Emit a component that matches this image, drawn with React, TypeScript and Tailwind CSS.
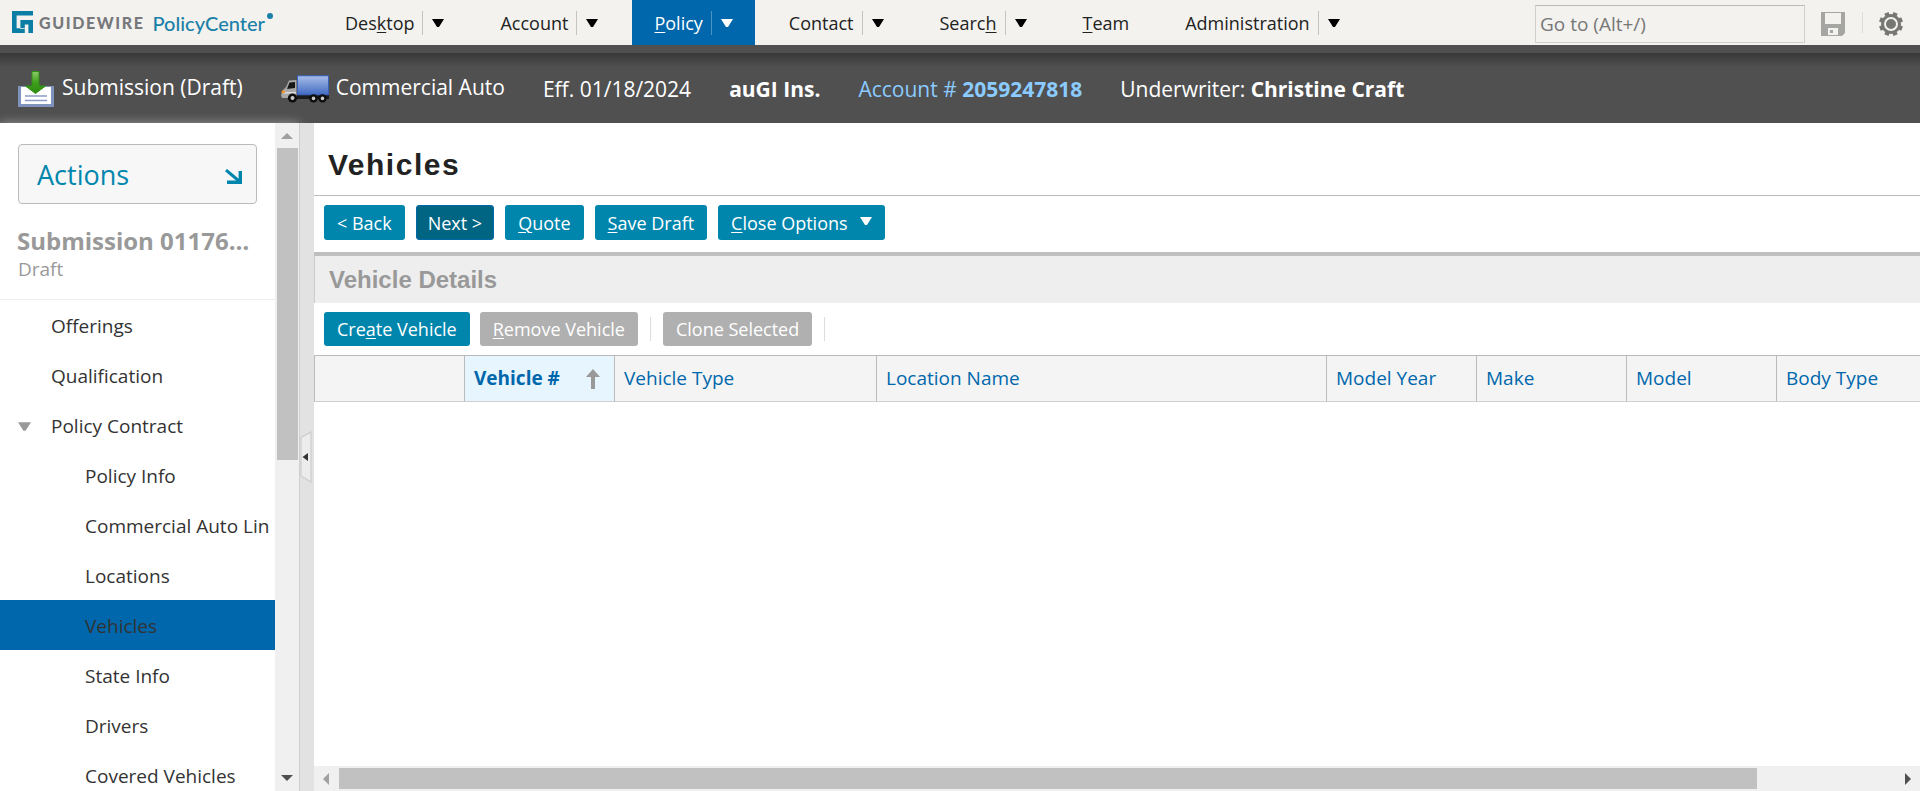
import type { ReactNode } from "react";

type NavItem = { before: string; key?: string; after?: string; active?: boolean; menu?: boolean };

const navItems: NavItem[] = [
  { before: "Des", key: "k", after: "top", menu: true },
  { before: "Account", menu: true },
  { before: "", key: "P", after: "olicy", menu: true, active: true },
  { before: "Contact", menu: true },
  { before: "Searc", key: "h", menu: true },
  { before: "", key: "T", after: "eam" },
  { before: "Administration", menu: true },
];

const steps = [
  { label: "Offerings", level: 0 },
  { label: "Qualification", level: 0 },
  { label: "Policy Contract", level: 0, open: true },
  { label: "Policy Info", level: 1 },
  { label: "Commercial Auto Lin", level: 1 },
  { label: "Locations", level: 1 },
  { label: "Vehicles", level: 1, active: true },
  { label: "State Info", level: 1 },
  { label: "Drivers", level: 1 },
  { label: "Covered Vehicles", level: 1 },
];

const columns = ["Vehicle Type", "Location Name", "Model Year", "Make", "Model", "Body Type"];

function Key({ children }: { children: ReactNode }) {
  return <span className="underline decoration-1 underline-offset-2">{children}</span>;
}

function Down({ className }: { className: string }) {
  return (
    <svg viewBox="0 0 12 8" className={className} fill="currentColor" aria-hidden="true">
      <path d="M0 0h12L7 8H5z" />
    </svg>
  );
}

function Logo() {
  return (
    <a href="#home" className="flex w-[311px] shrink-0 items-center pl-3 font-['Lato',sans-serif]">
      <svg viewBox="0 0 21 22" className="-mt-px h-[22px] w-[21px]" aria-hidden="true">
        <path fill="#0a7ea4" d="M0 0h21v4.600H4.600v12.600h3.800V9H21v13h-4.600v-8.600h-3.600V22H0z" />
        <path fill="#f3f2ee" d="M8 17.200h4.800v.8H8z" />
      </svg>
      <span className="ml-1.5 text-[16px] font-black tracking-widest text-[#77787b]">GUIDEWIRE</span>
      <span className="ml-2 text-[20px] leading-6 font-medium text-[#1a80a8]">PolicyCenter</span>
      <svg viewBox="0 0 6 6" className="mb-3.5 ml-0.5 h-1.5 w-1.5" aria-hidden="true">
        <circle cx="3" cy="3" r="3" fill="#1a80a8" />
      </svg>
    </a>
  );
}

function InboxIcon() {
  return (
    <svg viewBox="0 0 36 36" className="h-9 w-9" aria-hidden="true">
      <defs>
        <linearGradient id="arrow" x1="0" y1="0" x2="0" y2="1">
          <stop offset="0" stopColor="#8ccb6a" />
          <stop offset="0.500" stopColor="#3fa01c" />
          <stop offset="1" stopColor="#2c8a0e" />
        </linearGradient>
      </defs>
      <path fill="#7f93bd" d="M0 15h36v21H0z" />
      <path fill="#fff" d="M3 16h30v17H3z" />
      <path stroke="#8c9cc4" strokeWidth="1.500" d="M7 25h22M7 29.500h22" />
      <path fill="url(#arrow)" stroke="#2f8f14" strokeWidth="1" d="M14 .5h7V15h6.500l-10 7.500L7.500 15H14z" />
    </svg>
  );
}

function TruckIcon() {
  return (
    <svg viewBox="0 0 48 28" className="h-7 w-12" aria-hidden="true">
      <defs>
        <linearGradient id="box" x1="0" y1="0" x2="0" y2="1">
          <stop offset="0" stopColor="#a9bfea" />
          <stop offset="1" stopColor="#4069c0" />
        </linearGradient>
      </defs>
      <path fill="#1b1b1b" d="M12 20h36v4H12z" />
      <path fill="#a8a8a8" d="M8 5.500 15.500 5v18H1l-1-3 2-5 3-3z" />
      <path fill="#161616" d="M8.500 7.500 14 7v6l-8 1z" />
      <path fill="#ddd" d="M2 17h13v1.500H2z" />
      <path fill="#f29a2e" d="M1 15.500h3v2.500H.5z" />
      <path fill="url(#box)" stroke="#3a62bb" d="M16.500.8h31v19h-31z" />
      <g fill="#0d0d0d">
        <circle cx="11.500" cy="23" r="4.600" />
        <circle cx="32.500" cy="23.400" r="4.200" />
        <circle cx="41.500" cy="23.400" r="4.200" />
      </g>
      <g fill="#c9c9c9">
        <circle cx="11.500" cy="23" r="2" />
        <circle cx="32.500" cy="23.400" r="1.800" />
        <circle cx="41.500" cy="23.400" r="1.800" />
      </g>
    </svg>
  );
}

function SaveIcon() {
  return (
    <svg viewBox="0 0 24 24" className="h-6 w-6" aria-hidden="true">
      <path fill="#a5a5a3" d="M0 0h24v21l-3 3H0z" />
      <path fill="#f3f2ee" d="M4 1h16v11H4zM7 16h10v7H7z" />
      <path fill="#a5a5a3" d="M9 18h3v3H9z" />
    </svg>
  );
}

function GearIcon() {
  return (
    <svg viewBox="0 0 24 24" className="h-6 w-6" aria-hidden="true">
      <g fill="#777775">
        <rect x="9.750" y="0" width="4.500" height="24" transform="rotate(-22.500 12 12)" />
        <rect x="9.750" y="0" width="4.500" height="24" transform="rotate(22.500 12 12)" />
        <rect x="9.750" y="0" width="4.500" height="24" transform="rotate(67.500 12 12)" />
        <rect x="9.750" y="0" width="4.500" height="24" transform="rotate(-67.500 12 12)" />
        <circle cx="12" cy="12" r="10" />
      </g>
      <circle cx="12" cy="12" r="6" fill="#777775" stroke="#f3f2ee" strokeWidth="2" />
    </svg>
  );
}

const btn = "flex items-center rounded-[3px] text-[18px] leading-6 whitespace-nowrap text-white";

export default function App() {
  return (
    <div className="flex h-screen flex-col overflow-hidden bg-white font-['Open_Sans','Noto_Sans',sans-serif] text-[#222]">
      <header className="flex h-[45px] shrink-0 items-stretch bg-[#f3f2ee]">
        <Logo />
        <nav className="ml-3 flex gap-3" aria-label="Main">
          {navItems.map((item) => (
            <div
              key={item.before + (item.key ?? "")}
              className={`flex items-center px-[22px] text-[18px] ${item.active ? "bg-[#0067ac] text-white" : "text-[#222]"}`}
            >
              <a href="#tab" className="pt-0.5">
                {item.before}
                {item.key && <Key>{item.key}</Key>}
                {item.after}
              </a>
              {item.menu && (
                <button
                  type="button"
                  aria-label="Open menu"
                  className={`ml-2 flex h-6 items-center border-l pl-[9px] ${item.active ? "border-[#4d94c4] text-white" : "border-[#c4c3c0] text-black"}`}
                >
                  <Down className="h-2 w-3" />
                </button>
              )}
            </div>
          ))}
        </nav>
        <div className="ml-auto flex items-center pr-[17px]">
          <input
            type="text"
            aria-label="Go to"
            placeholder="Go to (Alt+/)"
            className="mt-[3px] h-[38px] w-[270px] border border-[#cfcfcf] border-t-[#bbb] bg-transparent px-1 text-[19px] placeholder:text-[#777]"
          />
          <button type="button" aria-label="Save" className="ml-4 pt-[3px]">
            <SaveIcon />
          </button>
          <span className="ml-[17px] h-[21px] w-px bg-[#ddd]" />
          <button type="button" aria-label="Settings" className="ml-4 pt-[3px]">
            <GearIcon />
          </button>
        </div>
      </header>

      <div className="h-2 shrink-0 bg-[#505050]" />
      <div className="flex h-[70px] shrink-0 items-center gap-[38px] bg-[#505050] bg-linear-to-b from-[#383838] to-[#505050] to-[14px] pl-[18px] pt-0.5 text-[21px] leading-7 whitespace-nowrap text-white">
        <div className="flex items-center gap-2">
          <InboxIcon />
          <span className="pb-1">Submission (Draft)</span>
        </div>
        <div className="flex items-center gap-[7px]">
          <TruckIcon />
          <span className="pb-1">Commercial Auto</span>
        </div>
        <span>Eff. 01/18/2024</span>
        <span className="font-bold">auGI Ins.</span>
        <a href="#account" className="text-[#8bcbff]">
          Account # <b>2059247818</b>
        </a>
        <span>
          Underwriter: <b>Christine Craft</b>
        </span>
      </div>

      <div className="flex min-h-0 flex-1">
        <aside className="flex w-[299px] shrink-0 bg-white shadow-[0_0_10px_rgba(255,255,255,0.4)]">
          <div className="min-w-0 flex-1 overflow-hidden">
            <div className="flex h-[177px] flex-col border-b border-[#eee] px-[18px] pt-[21px]">
              <button
                type="button"
                className="flex h-[60px] shrink-0 items-center justify-between rounded-[4px] border border-[#bbb] bg-[#f7f7f7] pr-3.5 pl-[18px] pt-0.5 text-[27px] text-[#0086ad]"
              >
                <span>Actions</span>
                <svg viewBox="0 0 17 15" className="mt-0.5 h-[15px] w-[17px]" aria-hidden="true">
                  <path d="M1 1l13 11" stroke="currentColor" strokeWidth="3" />
                  <path d="M2 13.200h13.300V2" fill="none" stroke="currentColor" strokeWidth="3.400" />
                </svg>
              </button>
              <h2 className="-ml-px mt-[21px] text-[24px] leading-8 font-bold whitespace-nowrap text-[#999]">Submission 01176…</h2>
              <p className="text-[19px] leading-6 text-[#999]">Draft</p>
            </div>
            <nav aria-label="Submission steps">
              {steps.map((s) => (
                <a
                  key={s.label}
                  href="#step"
                  className={`flex h-[50px] items-center pt-0.5 text-[19px] whitespace-nowrap text-[#333] ${s.level ? "pl-[85px]" : s.open ? "pl-[18px]" : "pl-[51px]"} ${s.active ? "bg-[#0067ac]" : ""}`}
                >
                  {s.open && <Down className="mr-5 h-[9px] w-[13px] text-[#999]" />}
                  {s.label}
                </a>
              ))}
            </nav>
          </div>
          <div className="flex w-6 shrink-0 flex-col items-center bg-[#f0f0f0]">
            <svg viewBox="0 0 12 6" className="mt-2.5 h-1.5 w-3" aria-hidden="true">
              <path fill="#a0a0a0" d="M6 0l6 6H0z" />
            </svg>
            <div className="mt-[9px] h-[46.700%] w-[21px] bg-[#c1c1c1]" />
            <svg viewBox="0 0 12 6" className="mt-auto mb-2.5 h-1.5 w-3" aria-hidden="true">
              <path fill="#505050" d="M0 0h12L6 6z" />
            </svg>
          </div>
        </aside>

        <div className="flex w-[15px] shrink-0 items-center border-l border-[#cfcfcf] bg-[#e2e2e2]">
          <button type="button" aria-label="Collapse sidebar">
            <svg viewBox="0 0 12 52" className="h-[52px] w-3" aria-hidden="true">
              <path fill="#ececec" stroke="#cdcdcd" strokeWidth="1.200" d="M1 6.500 11 1v50L1 45z" />
              <path fill="#333" d="M2.500 26 8 22v8z" />
            </svg>
          </button>
        </div>

        <main className="flex min-w-0 flex-1 flex-col">
          <h1 className="h-[73px] shrink-0 border-b border-[#bbb] pt-6 pl-3.5 font-['Liberation_Sans',sans-serif] text-[30px] leading-9 font-bold tracking-wider">
            Vehicles
          </h1>
          <div className="flex shrink-0 gap-[11px] border-b-4 border-[#bfbfbf] px-2.5 pt-[9px] pb-3 *:h-[35px]">
            <button type="button" className={`${btn} bg-[#0086ad] px-[13px]`}>&lt; Back</button>
            <button type="button" className={`${btn} border border-[#0067ac] bg-[#006583] px-[11px]`}>Next &gt;</button>
            <button type="button" className={`${btn} bg-[#0086ad] px-[13px]`}>
              <span><Key>Q</Key>uote</span>
            </button>
            <button type="button" className={`${btn} bg-[#0086ad] px-[13px]`}>
              <span><Key>S</Key>ave Draft</span>
            </button>
            <button type="button" className={`${btn} bg-[#0086ad] px-[13px]`}>
              <span><Key>C</Key>lose Options</span>
              <Down className="mb-1 ml-3 h-2 w-3" />
            </button>
          </div>
          <h2 className="h-[47px] shrink-0 border-l border-[#ccc] bg-[#eee] pl-3.5 font-['Liberation_Sans',sans-serif] text-[24px] leading-[48px] font-bold text-[#999]">
            Vehicle Details
          </h2>
          <div className="flex shrink-0 items-center px-2.5 py-[9px]">
            <button type="button" className={`${btn} h-[34px] bg-[#0086ad] px-[13px]`}>
              <span>Cre<Key>a</Key>te Vehicle</span>
            </button>
            <button type="button" disabled className={`${btn} ml-2.5 h-[34px] bg-[#b0b0b0] px-[13px]`}>
              <span><Key>R</Key>emove Vehicle</span>
            </button>
            <span className="mx-3 h-6 w-px bg-[#ddd]" />
            <button type="button" disabled className={`${btn} h-[34px] bg-[#b0b0b0] px-[13px]`}>Clone Selected</button>
            <span className="mx-3 h-6 w-px bg-[#ddd]" />
          </div>
          <div className="min-h-0 flex-1 overflow-hidden">
            <table className="w-[1612px] min-w-full table-fixed border-separate border-spacing-0 text-left text-[19px] text-[#0067ac]">
              <colgroup>
                <col className="w-[150px]" />
                <col className="w-[150px]" />
                <col className="w-[262px]" />
                <col className="w-[450px]" />
                <col className="w-[150px]" />
                <col className="w-[150px]" />
                <col className="w-[150px]" />
                <col />
              </colgroup>
              <thead>
                <tr className="h-[47px] *:border-y *:border-l *:border-[#bbb] *:border-b-[#d0d0d0]">
                  <td className="bg-[#f4f4f4]" />
                  <th scope="col" className="bg-[#e7f5ff] pr-3.5 pl-[9px] font-bold">
                    <div className="flex items-center justify-between">
                      Vehicle #
                      <svg viewBox="0 0 14 20" className="h-5 w-3.5" aria-hidden="true">
                        <path fill="#999" d="M7 0l7 8H9v12H5V8H0z" />
                      </svg>
                    </div>
                  </th>
                  {columns.map((c) => (
                    <th key={c} scope="col" className="bg-[#f4f4f4] px-[9px] font-normal">{c}</th>
                  ))}
                </tr>
              </thead>
            </table>
          </div>
          <div className="flex h-[25px] shrink-0 items-center bg-[#f0f0f0]">
            <svg viewBox="0 0 6 12" className="mr-2.5 ml-[9px] h-3 w-1.5" aria-hidden="true">
              <path fill="#a0a0a0" d="M6 0v12L0 6z" />
            </svg>
            <div className="flex-1">
              <div className="h-[21px] w-[91.100%] bg-[#c1c1c1]" />
            </div>
            <svg viewBox="0 0 6 12" className="mr-[9px] ml-2.5 h-3 w-1.5" aria-hidden="true">
              <path fill="#505050" d="M0 0v12l6-6z" />
            </svg>
          </div>
        </main>
      </div>
    </div>
  );
}
